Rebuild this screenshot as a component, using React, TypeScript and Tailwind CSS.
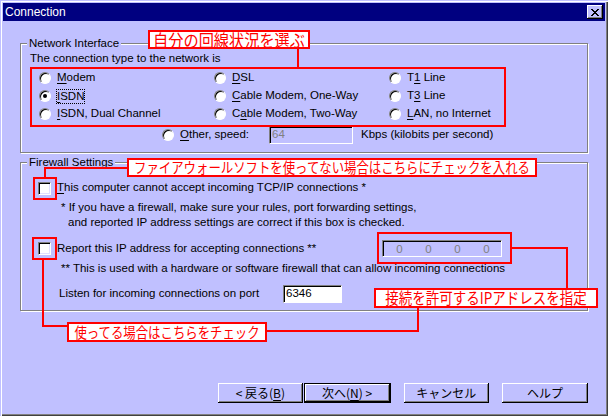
import React from 'react';

type Node = React.ReactNode;

const U = ({ children }: { children: Node }) => <span className="underline underline-offset-2">{children}</span>;

const Radio = ({ checked }: { checked?: boolean }) => (
  <span className="w-[12px] h-[12px] shrink-0 rounded-full bg-white border border-t-[#808080] border-l-[#808080] border-r-white border-b-white shadow-[inset_1px_1px_0_#000] flex items-center justify-center">
    {checked && <span className="w-[4px] h-[4px] rounded-full bg-black" />}
  </span>
);

const RadioOption = ({ label, checked, focus }: { label: Node; checked?: boolean; focus?: boolean }) => (
  <div className="flex items-center h-[18px]">
    <Radio checked={checked} />
    <span className={focus ? 'ml-[6px] outline-1 outline-dotted outline-black leading-[13px]' : 'ml-[6px]'}>{label}</span>
  </div>
);

const Checkbox = () => (
  <span className="w-[13px] h-[13px] shrink-0 bg-white border border-t-[#808080] border-l-[#808080] border-r-white border-b-white shadow-[inset_1px_1px_0_#000,inset_-1px_-1px_0_#dfdfff]" />
);

const Group = ({ title, className, children }: { title: string; className: string; children: Node }) => (
  <div className={'flex flex-col border border-[#808080] shadow-[inset_1px_1px_0_#fff,1px_1px_0_#fff] ' + className}>
    <span className="self-start -mt-[8px] ml-[6px] px-[2px] bg-[#c0c0ff] leading-[14px]">{title}</span>
    {children}
  </div>
);

const sunken = 'border border-t-[#808080] border-l-[#808080] border-r-white border-b-white shadow-[inset_1px_1px_0_#000]';

const Button = ({ children, primary, className }: { children: Node; primary?: boolean; className: string }) => (
  <div
    className={
      'h-[20px] flex items-center justify-center bg-[#c0c0ff] text-[12px] shadow-[inset_-1px_-1px_0_#000,inset_1px_1px_0_#fff,inset_-2px_-2px_0_#808080] ' +
      (primary ? 'border border-black ' : '') +
      className
    }
  >
    {children}
  </div>
);

const Note = ({ className, children, text = 'text-[12.4px]' }: { className: string; children: Node; text?: string }) => (
  <div className={'absolute border-2 border-[#ff0000] bg-white text-[#ff0000] flex items-center justify-center leading-none ' + text + ' ' + className}>
    <span className="inline-block scale-y-[1.15]">{children}</span>
  </div>
);

const Line = ({ className }: { className: string }) => <div className={'absolute bg-[#ff0000] ' + className} />;

export default function App() {
  return (
    <div
      className="relative w-[608px] h-[416px] overflow-hidden bg-[#c0c0ff] text-black text-[11.5px] shadow-[inset_1px_1px_0_#c0c0ff,inset_2px_2px_0_#fff,inset_-1px_-1px_0_#404040,inset_-2px_-2px_0_#808080] flex flex-col"
      style={{ fontFamily: '"Liberation Sans", "Noto Sans CJK JP", sans-serif' }}
    >
      {/* title bar */}
      <div className="mt-[3px] mx-[3px] h-[18px] bg-[#000080] flex items-center justify-between pl-[2px] pr-[2px]">
        <span className="text-white text-[12px]">Connection</span>
        <div className="w-[16px] h-[14px] bg-[#c0c0ff] flex items-center justify-center shadow-[inset_-1px_-1px_0_#000,inset_1px_1px_0_#fff,inset_-2px_-2px_0_#808080]">
          <svg width="8" height="7" viewBox="0 0 8 7" shapeRendering="crispEdges">
            <path d="M0 0h2v1h-2zM6 0h2v1h-2zM1 1h2v1h-2zM5 1h2v1h-2zM2 2h4v1h-4zM3 3h2v1h-2zM2 4h4v1h-4zM1 5h2v1h-2zM5 5h2v1h-2zM0 6h2v1h-2zM6 6h2v1h-2z" fill="#000" />
          </svg>
        </div>
      </div>

      <div className="flex flex-col px-[20px]">
        <Group title="Network Interface" className="mt-[22px] pb-[8px]">
          <div className="mt-[1px] ml-[9px] leading-[14px]">The connection type to the network is</div>
          <div className="mt-[4px] ml-[18px] grid grid-cols-[175px_175px_175px]">
            <RadioOption label={<><U>M</U>odem</>} />
            <RadioOption label={<><U>D</U>SL</>} />
            <RadioOption label={<>T<U>1</U> Line</>} />
            <RadioOption label={<><U>I</U>SDN</>} checked focus />
            <RadioOption label={<><U>C</U>able Modem, One-Way</>} />
            <RadioOption label={<>T<U>3</U> Line</>} />
            <RadioOption label={<><U>I</U>SDN, Dual Channel</>} />
            <RadioOption label={<>C<U>a</U>ble Modem, Two-Way</>} />
            <RadioOption label={<><U>L</U>AN, no Internet</>} />
          </div>
          <div className="mt-[3px] ml-[141px] h-[18px] flex items-center">
            <Radio />
            <span className="ml-[6px] w-[89px]"><U>O</U>ther, speed:</span>
            <div className={'w-[84px] h-[18px] pl-[2px] flex items-center text-[#808080] bg-[#c0c0ff] ' + sunken}>64</div>
            <span className="ml-[8px]">Kbps (kilobits per second)</span>
          </div>
        </Group>

        <Group title="Firewall Settings" className="mt-[9px] pb-[7px]">
          <div className="mt-[11px] ml-[17px] h-[16px] flex items-center">
            <Checkbox />
            <span className="ml-[6px]"><U>T</U>his computer cannot accept incoming TCP/IP connections *</span>
          </div>
          <div className="mt-[4px] ml-[40px] leading-[15px]">
            <div>* If you have a firewall, make sure your rules, port forwarding settings,</div>
            <div className="pl-[7px]">and reported IP address settings are correct if this box is checked.</div>
          </div>
          <div className="mt-[10px] ml-[17px] h-[17px] flex items-center">
            <div className="w-[344px] flex items-center">
              <Checkbox />
              <span className="ml-[6px]">Report this IP address for accepting connections **</span>
            </div>
            <div className={'w-[120px] h-[17px] pl-[2px] grid grid-cols-[29px_29px_29px_29px] items-center text-[#808080] bg-[#c0c0ff] ' + sunken}>
              <span className="text-center">0</span>
              <span className="text-center">0</span>
              <span className="text-center">0</span>
              <span className="text-center">0</span>
            </div>
          </div>
          <div className="mt-[4px] ml-[40px] leading-[15px]">
            ** This is used with a hardware or software firewall that can allow incoming connections
          </div>
          <div className="mt-[9px] ml-[38px] h-[18px] flex items-center">
            <span className="w-[224px]">Listen for incoming connections on port</span>
            <div className={'w-[59px] h-[18px] pl-[2px] flex items-center bg-white ' + sunken}>6346</div>
          </div>
        </Group>

        <div className="mt-[72px] ml-[198px] flex" style={{ fontFamily: '"Noto Sans CJK JP", sans-serif' }}>
          <Button className="w-[86px]">&lt; 戻る(<U>B</U>)</Button>
          <Button primary className="w-[88px] ml-[1px]">次へ(<U>N</U>) &gt;</Button>
          <Button className="w-[87px] ml-[13px]">キャンセル</Button>
          <Button className="w-[87px] ml-[13px]">ヘルプ</Button>
        </div>
      </div>

      {/* annotations */}
      <div style={{ fontFamily: '"Noto Sans CJK JP", sans-serif' }}>
        <Line className="left-[297px] top-[48px] w-[2px] h-[19px]" />
        <div className="absolute left-[30px] top-[67px] w-[476px] h-[60px] border-2 border-[#ff0000]" />
        <Note className="left-[148px] top-[30px] w-[162px] h-[19px]" text="text-[15.2px]">自分の回線状況を選ぶ</Note>

        <Line className="left-[44px] top-[167px] w-[83px] h-[2px]" />
        <Line className="left-[44px] top-[167px] w-[2px] h-[10px]" />
        <div className="absolute left-[33px] top-[177px] w-[24px] h-[23px] border-2 border-[#ff0000]" />
        <Note className="left-[127px] top-[158px] w-[410px] h-[19px]">ファイアウォールソフトを使ってない場合はこちらにチェックを入れる</Note>

        <div className="absolute left-[32px] top-[237px] w-[25px] h-[23px] border-2 border-[#ff0000]" />
        <Line className="left-[42px] top-[259px] w-[2px] h-[68px]" />
        <Line className="left-[42px] top-[325px] w-[25px] h-[2px]" />
        <Line className="left-[267px] top-[330px] w-[152px] h-[2px]" />
        <Line className="left-[417px] top-[307px] w-[2px] h-[25px]" />
        <Note className="left-[67px] top-[322px] w-[200px] h-[20px]">使ってる場合はこちらをチェック</Note>

        <div className="absolute left-[377px] top-[232px] w-[135px] h-[32px] border-2 border-[#ff0000]" />
        <Line className="left-[511px] top-[247px] w-[57px] h-[2px]" />
        <Line className="left-[566px] top-[247px] w-[2px] h-[41px]" />
        <Note className="left-[374px] top-[288px] w-[224px] h-[20px]" text="text-[13.5px]">接続を許可するIPアドレスを指定</Note>
      </div>
    </div>
  );
}
